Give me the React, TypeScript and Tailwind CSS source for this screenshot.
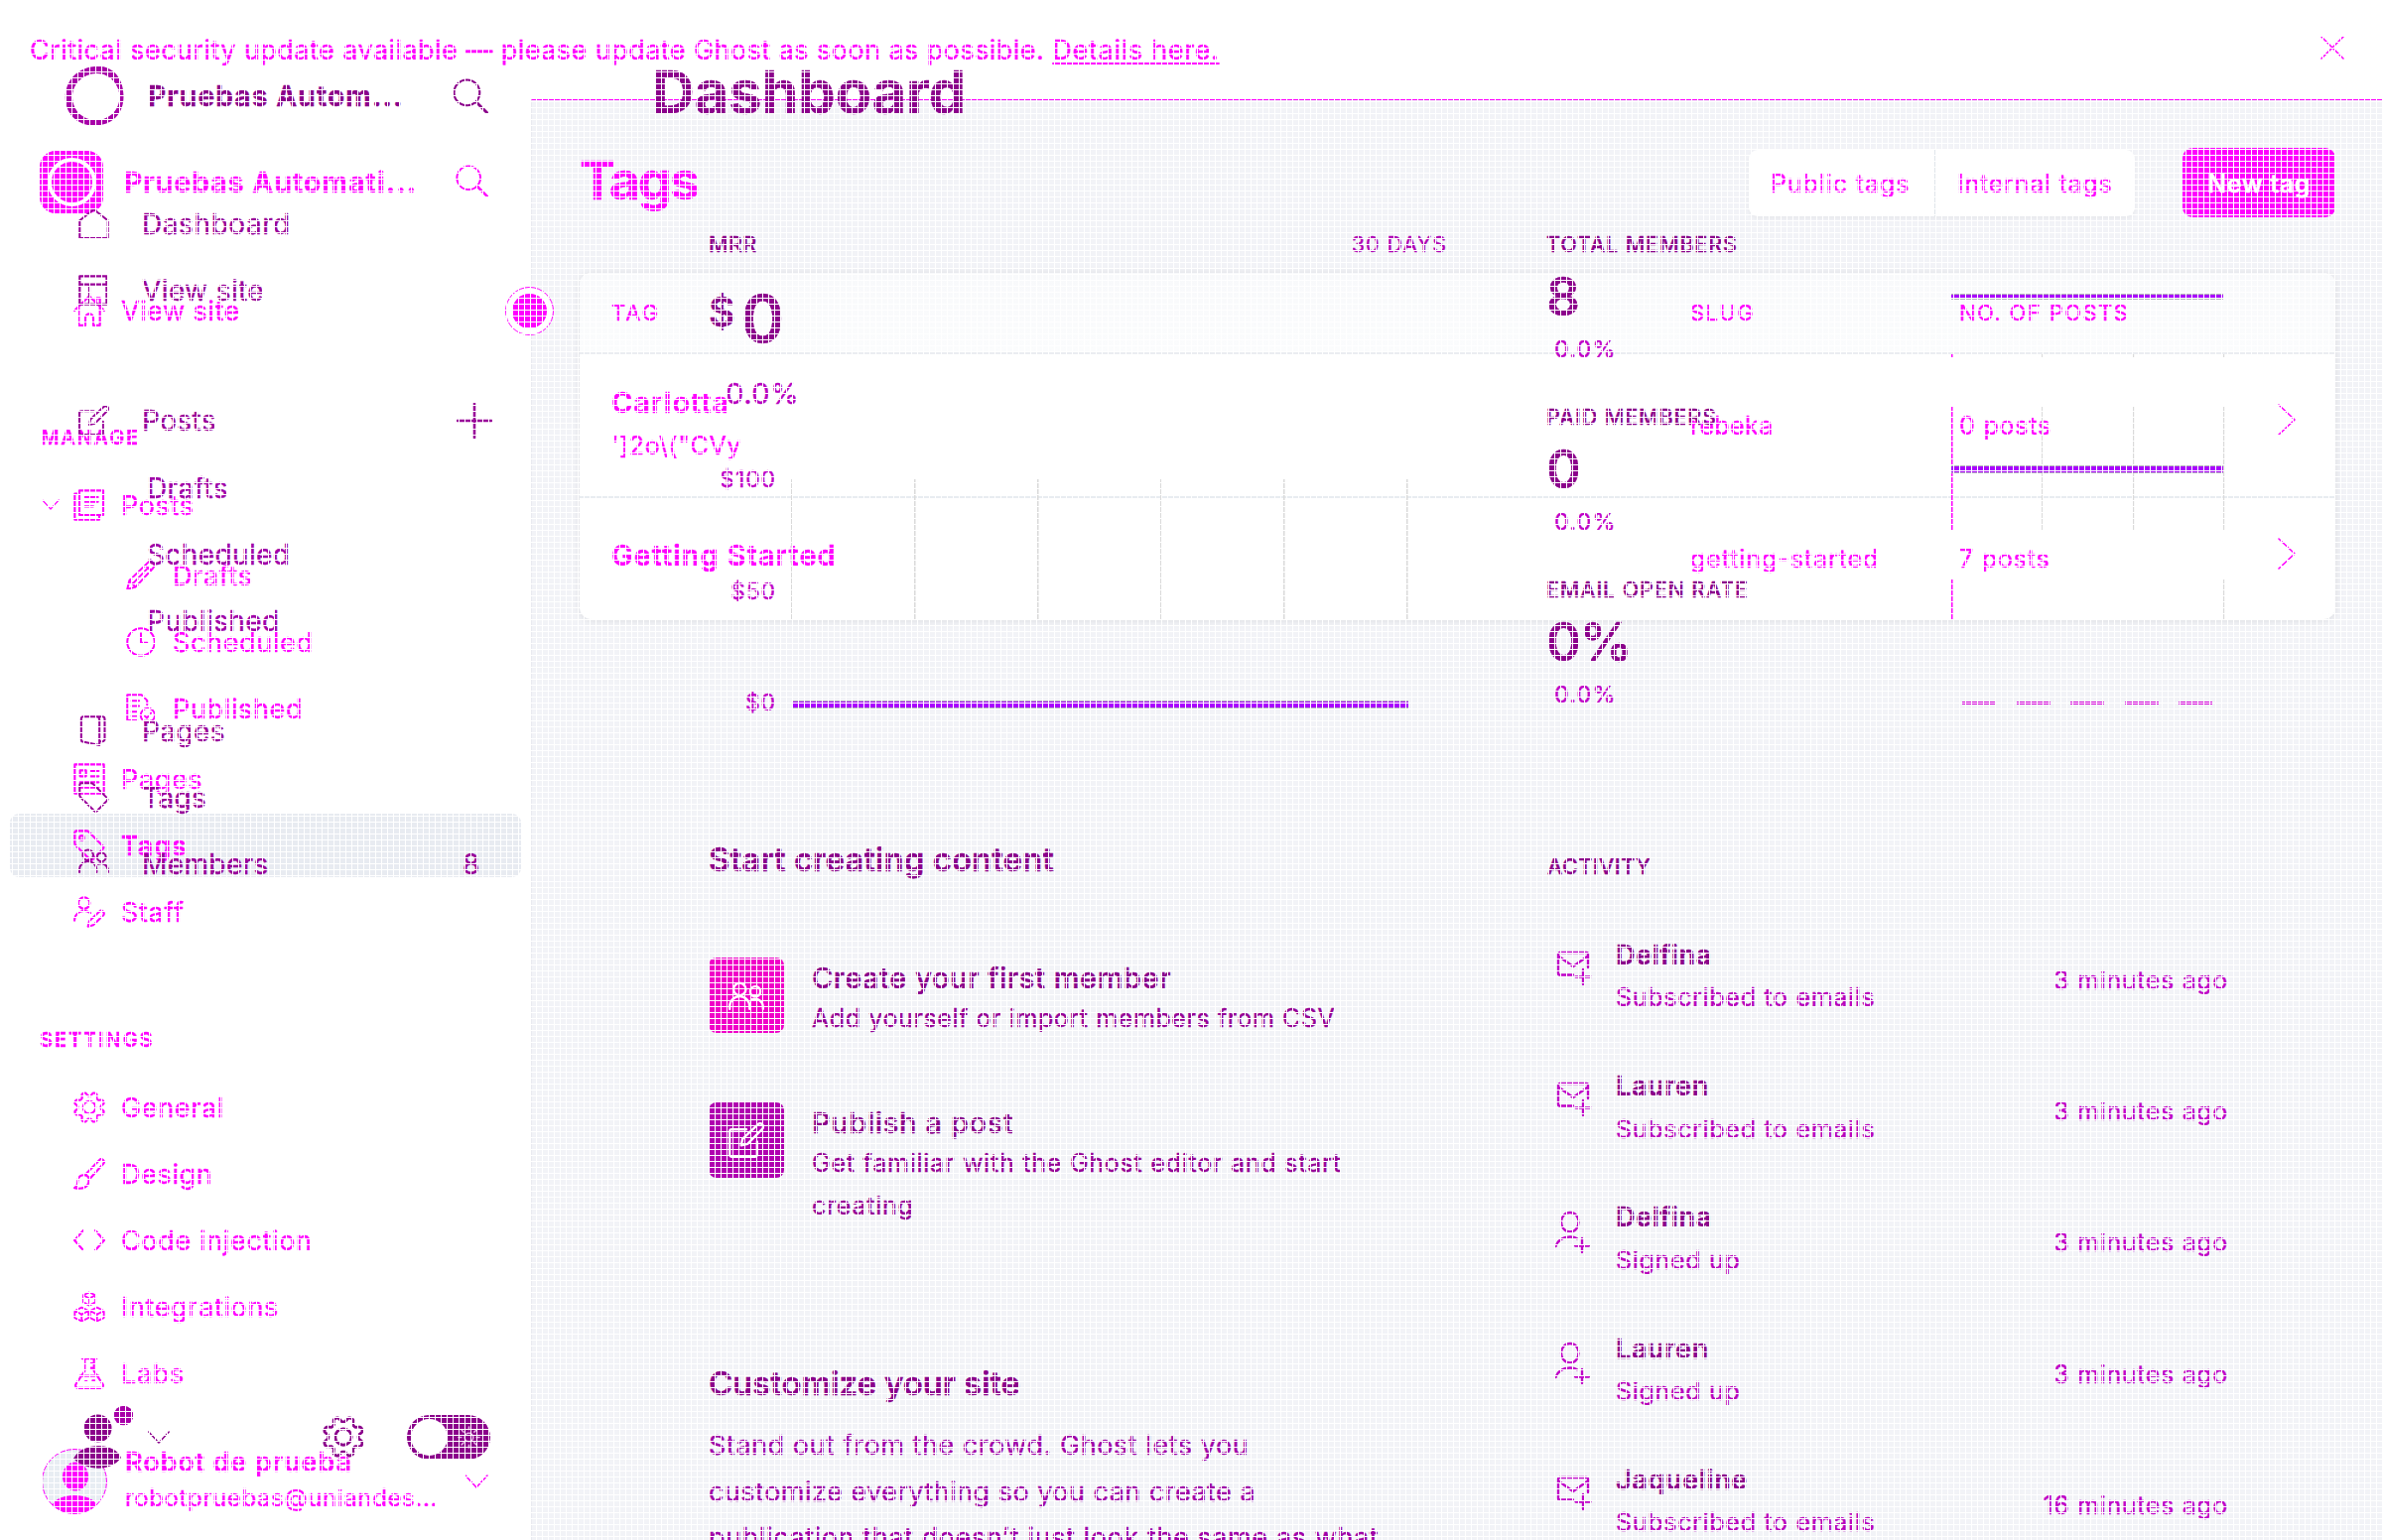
import React, { type ReactNode } from "react";

function Icon({
  children,
  className,
  box = "0 0 24 24",
  stroke = 1.6,
}: {
  children: ReactNode;
  className: string;
  box?: string;
  stroke?: number;
}) {
  return (
    <svg
      viewBox={box}
      className={className}
      fill="none"
      stroke="currentColor"
      strokeWidth={stroke}
      strokeLinecap="round"
      strokeLinejoin="round"
    >
      {children}
    </svg>
  );
}

const gearPath = (() => {
  const points: string[] = [];
  for (let i = 0; i < 96; i++) {
    const a = (i / 96) * Math.PI * 2;
    const r = 10.1 - 1.5 * Math.tanh(2 * Math.cos(8 * a));
    points.push(`${(12 + r * Math.cos(a)).toFixed(2)} ${(12 + r * Math.sin(a)).toFixed(2)}`);
  }
  return `M${points.join("L")}Z`;
})();

const Gear = ({ className }: { className: string }) => (
  <Icon className={className}>
    <path d={gearPath} />
    <circle cx="12" cy="12" r="4.7" />
  </Icon>
);

const Search = ({ className }: { className: string }) => (
  <Icon className={className} stroke={1.4}>
    <circle cx="9.6" cy="9.6" r="8.6" />
    <path d="M16 16l7.2 7.2" strokeWidth="1.9" />
  </Icon>
);

const Chevron = ({ className }: { className: string }) => (
  <Icon className={className} box="0 0 24 14" stroke={1.6}>
    <path d="M1 1l11 12L23 1" />
  </Icon>
);

const RightChevron = ({ className }: { className: string }) => (
  <Icon className={className} box="0 0 18 32">
    <path d="M1 1l16 15L1 31" />
  </Icon>
);

const Members = ({ className }: { className: string }) => (
  <Icon className={className}>
    <circle cx="7.5" cy="5.3" r="4.1" />
    <circle cx="18" cy="6.8" r="3.4" />
    <path d="M.8 18.5v-1.7a6.700 6.700 0 0 1 13.400 0v1.7M15.500 12.300a5.500 5.500 0 0 1 7.700 5v1.200" />
  </Icon>
);

const Compose = ({ className }: { className: string }) => (
  <Icon className={className}>
    <path d="M12 4.800H2.200a1.400 1.400 0 0 0-1.400 1.400v15.600a1.400 1.400 0 0 0 1.400 1.400h15.600a1.400 1.400 0 0 0 1.400-1.400V13" />
    <path d="M8.500 15.500l.9-4.300L19.700 1.500a2.100 2.100 0 0 1 3 3L12.800 14.600z" />
  </Icon>
);

const TagShape = ({ className, hole }: { className: string; hole?: boolean }) => (
  <Icon className={className}>
    <path d="M1 2.500A1.500 1.500 0 0 1 2.500 1h7.300a2.500 2.500 0 0 1 1.800.7l10.700 10.800a1.500 1.500 0 0 1 0 2.100l-7.800 8a1.500 1.500 0 0 1-2.100 0L1.700 12a2.500 2.500 0 0 1-.7-1.800z" />
    {hole && <circle cx="6.300" cy="6.300" r="1.700" />}
  </Icon>
);

const primary = "h-8 w-8 shrink-0";
const secondary = "h-[30px] w-[30px] shrink-0";

function NavRow({ icon, label, sub, lead }: { icon: ReactNode; label: string; sub?: boolean; lead?: ReactNode }) {
  return (
    <div className={sub ? "flex h-[67px] items-center gap-[17px] pl-[127px]" : "flex h-[67px] items-center gap-4"}>
      {!sub && <span className="flex w-[58px] justify-end">{lead}</span>}
      {icon}
      <span className="pt-0.5">{label}</span>
    </div>
  );
}

function TagsSidebar() {
  return (
    <aside className="flex w-[535px] shrink-0 flex-col bg-white text-[27px] leading-none tracking-[0.65px]">
      <div className="mt-[51px] flex h-16 items-center pl-10">
        <span className="flex h-[63px] w-16 items-center justify-center rounded-[16px] bg-[#ff00ff]">
          <span className="h-[49px] w-[49px] rounded-full border-4 border-white" />
        </span>
        <span className="ml-[21px] w-[334px] pt-px text-[28px] font-bold tracking-[1.15px]">Pruebas Automati...</span>
        <Search className="mb-px h-[33px] w-[33px]" />
      </div>

      <div className="mt-16">
        <div className="flex h-[67px] items-center pl-[74px]">
          <Icon className={primary}>
            <path d="M.8 12L12 1.200 23.200 12M4 9.500v13.700h5v-5.700a3 3 0 0 1 6 0v5.700h5V9.500M17 5.500V2.500h3v6" />
          </Icon>
          <span className="ml-4 pt-0.5 tracking-[0.5px]">View site</span>
        </div>
      </div>

      <div className="mt-[74px] flex h-10 items-center pl-[41px] pt-px text-[20px] font-semibold tracking-[1.8px]">MANAGE</div>
      <div className="mt-[15px]">
        <NavRow
          label="Posts"
          lead={<Chevron className="-mr-0.5 h-[11px] w-[18px]" />}
          icon={
            <Icon className={primary}>
              <path d="M4.500 1h18v18.500h-18zM4.500 3.500H1V23h18.500v-3.500M8.500 6h10M8.500 9.500h10M8.500 13h6.500" />
            </Icon>
          }
        />
      </div>
      <div className="mt-1">
        <NavRow
          sub
          label="Drafts"
          icon={
            <Icon className={secondary}>
              <path d="M1 23l1.700-7L17.500 1.700a2.800 2.800 0 0 1 4.300 4.300L7.600 21.300zM2.700 16l4.900 5.300M5.500 18.500L18 5.500M15.500 3.700l4.700 4.500" />
            </Icon>
          }
        />
        <NavRow
          sub
          label="Scheduled"
          icon={
            <Icon className={secondary}>
              <circle cx="12" cy="12" r="11" />
              <path d="M12 5v7.500h5" />
            </Icon>
          }
        />
        <NavRow
          sub
          label="Published"
          icon={
            <Icon className={secondary}>
              <path d="M9 21.500H1V1h11.500L17 5.500V9M4.500 5.800h6M4.500 10h6M4.500 14.500h4M4.500 18h4" />
              <circle cx="17.500" cy="17.500" r="5.700" />
              <path d="M15 17.800l1.800 1.900 3.200-4" />
            </Icon>
          }
        />
      </div>
      <div className="mt-1">
        <NavRow
          label="Pages"
          icon={
            <Icon className={primary}>
              <path d="M1 1h22v22H1zM5 5.500h4.500V10H5zM13 6h6M13 10h6M5 14.500h14M5 18.500h14" />
            </Icon>
          }
        />
        <div className="flex h-[67px] items-center px-2.5">
          <div className="flex h-16 w-full items-center rounded-[9px] bg-[#e8ebf1] pl-16">
            <TagShape className={primary} hole />
            <span className="ml-4 pt-0.5 font-semibold tracking-[0.9px]">Tags</span>
          </div>
        </div>
        <NavRow
          label="Staff"
          icon={
            <Icon className={primary}>
              <circle cx="8" cy="5.300" r="4.300" />
              <path d="M.8 18.500a7.400 7.400 0 0 1 12-5.700M11 23l1-4 7.500-7.200a2 2 0 0 1 3 2.900L15 22z" />
            </Icon>
          }
        />
      </div>

      <div className="mt-[75px] flex h-10 items-center pl-10 pt-px text-[20px] font-semibold tracking-[1.9px]">SETTINGS</div>
      <div className="mt-[15px]">
        <NavRow label="General" icon={<Gear className={primary} />} />
        <NavRow
          label="Design"
          icon={
            <Icon className={primary}>
              <path d="M9 12.500L19.500 1.700a2 2 0 0 1 3 2.800L12.500 15.500M9 12.500l3.500 3M9.700 13.200c-4-1-6.500 1.200-6.500 4.500 0 2.500-.7 4-2.400 4.900 6.500 1.500 11.700-1 10.700-6.900" />
            </Icon>
          }
        />
        <NavRow
          label="Code injection"
          icon={
            <Icon className={primary}>
              <path d="M7.500 4.500L.8 12l6.700 7.500M16.500 4.500l6.700 7.500-6.700 7.500" />
            </Icon>
          }
        />
        <NavRow
          label="Integrations"
          icon={
            <Icon className={primary} stroke={1.4}>
              <path d="M12 1l4.600 2.200v5.300L12 11 7.400 8.500V3.200zM7.400 3.200L12 5.700l4.600-2.500M12 5.700V11" />
              <path d="M6.200 12.500l5.200 2.500v5.300l-5.200 2.600L1 20.300V15zM1 15l5.200 2.700 5.200-2.700M6.200 17.700v5.200" />
              <path d="M17.800 12.500L23 15v5.300l-5.200 2.600-5.200-2.600V15zM12.600 15l5.200 2.700L23 15M17.800 17.700v5.200" />
            </Icon>
          }
        />
        <NavRow
          label="Labs"
          icon={
            <Icon className={primary}>
              <path d="M6.500.8h11M8.500.8v9.500L2 20a2 2 0 0 0 1.700 3.200h16.600A2 2 0 0 0 22 20l-6.500-9.700V.8M5 14h14M15.500 4.500H13M15.500 8H13M9 18h1M14.500 17.500h1.500" />
            </Icon>
          }
        />
      </div>

      <div className="mt-[37px] flex h-[73px] items-end pl-[42px]">
        <svg viewBox="0 0 66 68" className="h-[68px] w-[66px]">
          <clipPath id="avatar-clip">
            <circle cx="33" cy="34" r="32.500" />
          </clipPath>
          <circle cx="33" cy="34" r="32.500" fill="#e8edf3" stroke="#ff00ff" strokeWidth="1" />
          <g clipPath="url(#avatar-clip)" fill="#ff00ff">
            <ellipse cx="34" cy="29" rx="13" ry="14.500" />
            <ellipse cx="33" cy="62" rx="24" ry="14" />
          </g>
        </svg>
        <div className="ml-[18px] w-[342px]">
          <div className="flex h-9 items-center pt-0.5 font-semibold tracking-[0.88px]">Robot de prueba</div>
          <div className="flex h-[37px] items-center pt-0.5 text-[24px] tracking-[0.62px]">robotpruebas@uniandes...</div>
        </div>
        <Chevron className="mb-[27px] h-[14px] w-6" />
      </div>
    </aside>
  );
}

const tagRows = [
  { name: "Carlotta", text: "']2o\\(\"CVy", slug: "rebeka", posts: "0 posts" },
  { name: "Getting Started", text: "", slug: "getting-started", posts: "7 posts" },
];

function TagsScreen() {
  return (
    <div className="absolute inset-0 flex flex-col overflow-hidden bg-white text-[#ff00ff]">
      <div className="flex h-[100px] shrink-0 items-center justify-between pl-[30px] pr-[38px] text-[27px] leading-none tracking-[0.45px]">
        <p className="whitespace-pre">
          Critical security update available — please update Ghost as soon as possible.{" "}
          <span className="tracking-[0.7px] underline decoration-2 underline-offset-[3px]">Details here.</span>
        </p>
        <Icon className="mb-1 h-6 w-6">
          <path d="M1 1l22 22M23 1L1 23" />
        </Icon>
      </div>
      <div className="flex min-h-0 flex-1">
        <TagsSidebar />
        <main className="flex-1 border-l border-t border-l-[#e9eaf0] border-t-[#ff00ff] bg-[#f2f3f7] pl-12 pr-[47px] leading-none">
          <div className="mt-12 flex h-[70px] items-center">
            <h1 className="flex-1 pb-[5px] text-[54px] font-bold tracking-[-2.3px]">Tags</h1>
            <div className="flex h-[67px] w-[389px] overflow-hidden rounded-[9px] bg-white text-[25px] tracking-[0.9px] shadow-[0_2px_5px_rgba(0,0,0,0.05)]">
              <span className="flex w-[188px] items-center border-r border-[#e0e5ea] pl-[22px] pt-[3px]">Public tags</span>
              <span className="flex items-center pl-[22px] pt-[3px] tracking-[0.76px]">Internal tags</span>
            </div>
            <span className="ml-12 flex h-[70px] w-[154px] items-center justify-center rounded-[10px] bg-[#ff00ff] pt-0.5 text-[25px] font-semibold tracking-[0.6px] text-white">
              New tag
            </span>
          </div>

          <section className="mt-14 h-[349px] overflow-hidden rounded-[12px] bg-white text-[25px] shadow-[0_1px_9px_rgba(0,0,0,0.1)]">
            <div className="grid h-[82px] grid-cols-[1119px_271px_321px_1fr] items-center border-b-2 border-[#ebedf1] bg-linear-to-b from-[#f8f9fb] to-[#fbfcfd] text-[22px] tracking-[1.4px]">
              <span className="pl-8 tracking-[2px]">TAG</span>
              <span>SLUG</span>
              <span>NO. OF POSTS</span>
            </div>
            {tagRows.map((row) => (
              <div
                key={row.name}
                className={
                  row.text
                    ? "grid h-[145px] grid-cols-[1119px_271px_321px_1fr] items-center border-b-2 border-[#e8ecf1]"
                    : "grid h-[122px] grid-cols-[1119px_271px_321px_1fr] items-center"
                }
              >
                <div className={row.text ? "pb-[3px] pl-8" : "pb-2 pl-8"}>
                  <div className="flex h-11 items-center text-[29px] font-semibold tracking-[0.95px]">{row.name}</div>
                  {row.text && <div className="flex h-11 items-center tracking-[0.6px]">{row.text}</div>}
                </div>
                <span className={row.text ? "pt-0.5 tracking-[0.4px]" : "pt-px tracking-[0.92px]"}>{row.slug}</span>
                <span className={row.text ? "pt-0.5 tracking-[0.8px]" : "pt-px tracking-[0.8px]"}>{row.posts}</span>
                <RightChevron className="mb-[11px] h-8 w-[18px]" />
              </div>
            ))}
          </section>
        </main>
      </div>
    </div>
  );
}

function DashRow({ icon, label, className = "" }: { icon?: ReactNode; label: string; className?: string }) {
  return (
    <div className="flex h-[67px] items-center pl-[79px]">
      {icon}
      <span className={`${icon ? "ml-[33px]" : "ml-[69px]"} ${className}`}>{label}</span>
    </div>
  );
}

function DashboardSidebar() {
  const icon = "h-[31px] w-[31px] shrink-0";
  return (
    <aside className="flex w-[535px] shrink-0 flex-col text-[28px] leading-none tracking-[0.4px] text-[#990099]">
      <div className="mt-[66px] flex h-[61px] items-center pl-[65px] text-[#8b008b]">
        <svg viewBox="0 0 60 61" className="h-[61px] w-[60px]">
          <path
            fillRule="evenodd"
            fill="#a800a8"
            d="M34 .8C49 .8 59.500 13 59.500 31S48 60.500 30 60.500 .8 48 .8 32 13 .8 34 .8zM32 8C19 8.500 8 18 8 31.500S18 55 32 55 55.500 44 55.500 31.500 45 7.500 32 8z"
          />
        </svg>
        <span className="ml-6 w-[307px] pt-px font-bold tracking-[1.14px]">Pruebas Autom...</span>
        <Search className="h-[36px] w-[36px]" />
      </div>

      <div className="mt-[65px]">
        <DashRow
          label="Dashboard"
          className="tracking-[0.59px]"
          icon={
            <Icon className={icon}>
              <path d="M1 9.500V23.200h22V9.500L12 .8z" />
            </Icon>
          }
        />
        <DashRow
          label="View site"
          icon={
            <Icon className={icon}>
              <path d="M1 1h21v22H1zM1 7.500h21M8.500 7.500V23" strokeWidth="1.7" />
            </Icon>
          }
        />
      </div>
      <div className="mt-16 flex items-center">
        <div className="w-[460px]">
          <DashRow label="Posts" icon={<Compose className={icon} />} />
        </div>
        <Icon className="h-9 w-9" stroke={1.7}>
          <path d="M12 .5v23M.5 12h23" />
        </Icon>
      </div>
      <div className="mt-px text-[#a000a8]">
        <DashRow label="Drafts" />
        <DashRow label="Scheduled" />
        <DashRow label="Published" />
      </div>
      <div className="mt-11">
        <DashRow
          label="Pages"
          icon={
            <Icon className={icon}>
              <path d="M3.800.9h10.400a2.200 2.200 0 0 1 2.200 2.200V23.200L3.500 20.600a1.600 1.600 0 0 1-1.300-1.600V2.500A1.600 1.600 0 0 1 3.800.9zM9 .9h9.700a1.800 1.800 0 0 1 1.800 1.800v15.800a1.800 1.800 0 0 1-1.800 1.800h-2.300" />
            </Icon>
          }
        />
        <DashRow label="Tags" icon={<TagShape className={icon} />} />
        <div className="h-[45px] overflow-hidden">
          <div className="flex items-center">
            <div className="w-[466px]">
              <DashRow label="Members" icon={<Members className="h-[31px] w-[31px] shrink-0" />} />
            </div>
            <span>8</span>
          </div>
        </div>
      </div>

      <div className="mt-[534px] flex h-16 shrink-0 items-center pl-[74px] text-[#8b008b]">
        <svg viewBox="0 0 60 64" className="h-16 w-[60px]" fill="currentColor">
          <circle cx="24.500" cy="23.500" r="14" />
          <path d="M0 54C8 38 40 36 48 53 38 68 12 66 0 54z" />
          <circle cx="50.500" cy="10.500" r="9.800" fill="#a800a8" />
        </svg>
        <Chevron className="ml-[14px] h-[13px] w-6" />
        <Gear className="ml-[153px] h-[42px] w-[42px]" />
        <span className="ml-[43px] flex h-[45px] w-[84px] items-center rounded-full bg-[#8b008b] pl-[4px]">
          <span className="h-[37px] w-[37px] rounded-full bg-white" />
          <Icon className="ml-2.5 h-[23px] w-[23px] text-[#e6b8e6]">
            <circle cx="12" cy="12" r="4.500" />
            <path d="M12 1v3M12 20v3M1 12h3M20 12h3M4.200 4.200l2.200 2.200M17.600 17.600l2.200 2.200M19.800 4.200l-2.200 2.200M6.400 17.600l-2.200 2.200" />
          </Icon>
        </span>
      </div>
    </aside>
  );
}

function LineSegment({ y, width, thickness = 4 }: { y: number; width: number; thickness?: number }) {
  return (
    <>
      <rect x="0" y={y} width={width} height={thickness + 2} fill="#b4b4bd" />
      <rect x="0" y={y + 1} width={width} height={thickness} fill="#aa00ff" />
    </>
  );
}

const mrrTicks = [0, 124, 248, 372, 496, 620];
const sparkTicks = [91, 183, 274];
const dashes = [11, 66, 120, 175, 229];

function MrrChart() {
  return (
    <div className="mt-[54px] flex h-[250px] text-[#c000c8]">
      <div className="flex w-[68px] flex-col items-end justify-between pt-px text-[23px] tracking-[0.9px]">
        <span className="leading-6">$100</span>
        <span className="leading-6">$50</span>
        <span className="leading-6">$0</span>
      </div>
      <svg viewBox="0 0 624 250" className="ml-[15px] h-[250px] w-[624px]">
        {mrrTicks.map((x) => (
          <rect key={x} x={x} y="13" width="1.500" height="141" fill="#dadada" />
        ))}
        <g transform="translate(2 0)">
          <LineSegment y={236} width={620} thickness={6} />
        </g>
      </svg>
    </div>
  );
}

const stats = [
  { label: "TOTAL MEMBERS", value: "8", from: 126, to: 130, ticks: sparkTicks, thickness: 4, lineY: 65 },
  { label: "PAID MEMBERS", value: "0", from: 5, to: 130, ticks: sparkTicks, thickness: 6, lineY: 64 },
  { label: "EMAIL OPEN RATE", value: "0%", from: 5, to: 45, ticks: [274], thickness: 0, lineY: 0 },
];

const mail = (
  <path d="M19 27.500H5.500A1.500 1.500 0 0 1 4 26V6.500A1.500 1.500 0 0 1 5.500 5h27A1.500 1.500 0 0 1 34 6.500V20M5 9l14 10L33 9M29 22v15M21.500 29.500h15" />
);
const signup = (
  <path d="M16 2c5.200 0 8.500 4.300 8.500 9.500S21.200 21.500 16 21.500 7 16.700 7 11.500 10.800 2 16 2zM1.500 36C4 29 9 26.500 16 26.500c3 0 5 .5 7 1.700M28 28v14M21 35.500h14" />
);

const activity = [
  { name: "Delfina", event: "Subscribed to emails", time: "3 minutes ago", icon: mail },
  { name: "Lauren", event: "Subscribed to emails", time: "3 minutes ago", icon: mail },
  { name: "Delfina", event: "Signed up", time: "3 minutes ago", icon: signup },
  { name: "Lauren", event: "Signed up", time: "3 minutes ago", icon: signup },
  { name: "Jaqueline", event: "Subscribed to emails", time: "16 minutes ago", icon: mail },
];

function DashboardScreen() {
  return (
    <div className="absolute inset-0 flex overflow-hidden text-[#8b008b]">
      <DashboardSidebar />
      <main className="flex-1 whitespace-nowrap leading-none">
        <h1 className="mt-[53px] flex h-20 items-center pl-[122px] text-[59.3px] font-bold">Dashboard</h1>
        <div className="flex pl-[179px]">
          <div className="w-[744px]">
            <div className="mt-[98px] flex h-[30px] items-center justify-between pt-0.5 text-[21.5px]">
              <span className="font-medium tracking-[0.3px]">MRR</span>
              <span className="tracking-[1px] text-[#b000b4]">30 DAYS</span>
            </div>
            <div className="mt-5 flex h-20 items-center font-semibold">
              <span className="mb-[14px] text-[41px]">$</span>
              <span className="ml-1.5 text-[66px]">0</span>
            </div>
            <div className="mt-[15px] flex h-10 items-center pl-[17px] text-[29px] tracking-[0.58px] text-[#b800c0]">0.0%</div>
            <MrrChart />

            <h2 className="mt-[126px] flex h-10 items-center pt-px text-[33px] font-semibold">Start creating content</h2>
            <div className="mt-[79px] flex h-[146px] gap-7">
              <span className="flex h-[76px] w-[76px] items-center justify-center rounded-[8px] bg-[#f000c8] text-white">
                <Members className="mt-2 h-9 w-9" />
              </span>
              <div>
                <div className="flex h-10 items-center text-[29px] font-medium tracking-[0.6px]">Create your first member</div>
                <p className="text-[25px] leading-[42.5px] tracking-[0.6px] text-[#960096]">
                  Add yourself or import members from CSV
                </p>
              </div>
            </div>
            <div className="flex h-[262px] gap-7">
              <span className="flex h-[76px] w-[76px] items-center justify-center rounded-[8px] bg-[#b000b0] text-white">
                <Compose className="h-9 w-9" />
              </span>
              <div>
                <div className="flex h-10 items-center text-[29px] font-medium tracking-[0.64px]">Publish a post</div>
                <p className="text-[25px] leading-[42.5px] tracking-[0.77px] text-[#960096]">
                  Get familiar with the Ghost editor and start
                  <br />
                  creating
                </p>
              </div>
            </div>
            <h2 className="flex h-10 items-center pt-0.5 text-[33px] font-semibold tracking-[-0.13px]">Customize your site</h2>
            <p className="mt-[21px] text-[27px] leading-[46.5px] tracking-[0.55px] text-[#a000a8]">
              Stand out from the crowd. Ghost lets you
              <br />
              <span className="tracking-[0.48px]">customize everything so you can create a</span>
              <br />
              <span className="tracking-[0.6px]">publication that doesn’t just look the same as what</span>
            </p>
          </div>

          <div className="ml-[100px] w-[687px]">
            <div className="mt-[98px]">
              {stats.map((s) => (
                <div key={s.label} className="flex h-[174px]">
                  <div className="w-[408px]">
                    <div className="flex h-[30px] items-center pt-0.5 text-[21.5px] font-medium tracking-[0.85px]">{s.label}</div>
                    <div className="mt-2 flex h-[60px] items-center text-[53px] font-semibold tracking-[-1.5px]">{s.value}</div>
                    <div className="mt-2 flex h-[30px] items-center pl-2 text-[23.5px] tracking-[1.1px] text-[#c000c8]">0.0%</div>
                  </div>
                  <svg viewBox="0 0 276 174" className="h-[174px] w-[276px]">
                    <rect x="0" y={s.from} width="1.500" height={s.to - s.from} fill="#ff00ff" />
                    {s.ticks.map((x) => (
                      <rect key={x} x={x} y={s.from} width="1.200" height={s.to - s.from} fill="#dadada" />
                    ))}
                    {s.thickness > 0 ? (
                      <LineSegment y={s.lineY} width={274} thickness={s.thickness} />
                    ) : (
                      dashes.map((x) => <rect key={x} x={x} y="128" width="34" height="3" fill="#d400d8" />)
                    )}
                  </svg>
                </div>
              ))}
            </div>

            <h3 className="mt-[105px] flex h-[30px] items-center pl-px pt-0.5 text-[21.5px] font-medium tracking-[0.5px]">ACTIVITY</h3>
            <div className="mt-[53px]">
              {activity.map((a, i) => (
                <div key={i} className="flex h-[132.3px]">
                  <Icon className="ml-2 mt-[14px] h-[46px] w-[38px] text-[#c000c8]" box="0 0 38 46" stroke={2.3}>
                    {a.icon}
                  </Icon>
                  <div className="ml-6 flex-1">
                    <div className="flex h-[42.5px] items-center text-[27px] font-semibold tracking-[0.65px]">{a.name}</div>
                    <div className="flex h-[42.5px] items-center pt-0.5 text-[25px] tracking-[0.7px] text-[#b800bc]">{a.event}</div>
                  </div>
                  <span className="mt-[26px] flex h-[42.5px] items-center text-[25px] tracking-[0.66px] text-[#c000c8]">{a.time}</span>
                </div>
              ))}
            </div>
          </div>
        </div>
      </main>
    </div>
  );
}

export default function App() {
  return (
    <div className="relative h-[1552px] w-[2400px] overflow-hidden bg-white font-['Inter',sans-serif] [-webkit-text-stroke:0.4px]">
      <TagsScreen />
      <DashboardScreen />
      <div className="absolute left-[509px] top-[289px] flex h-[49px] w-[49px] items-center justify-center rounded-full border border-[#ff00ff] bg-white">
        <span className="h-[35px] w-[35px] rounded-full bg-[#ff00ff]" />
      </div>
      <div className="pointer-events-none absolute inset-0 bg-[linear-gradient(to_right,#fff_1px,transparent_1px),linear-gradient(to_bottom,#fff_1px,transparent_1px)] bg-[size:6px_6px]" />
    </div>
  );
}
